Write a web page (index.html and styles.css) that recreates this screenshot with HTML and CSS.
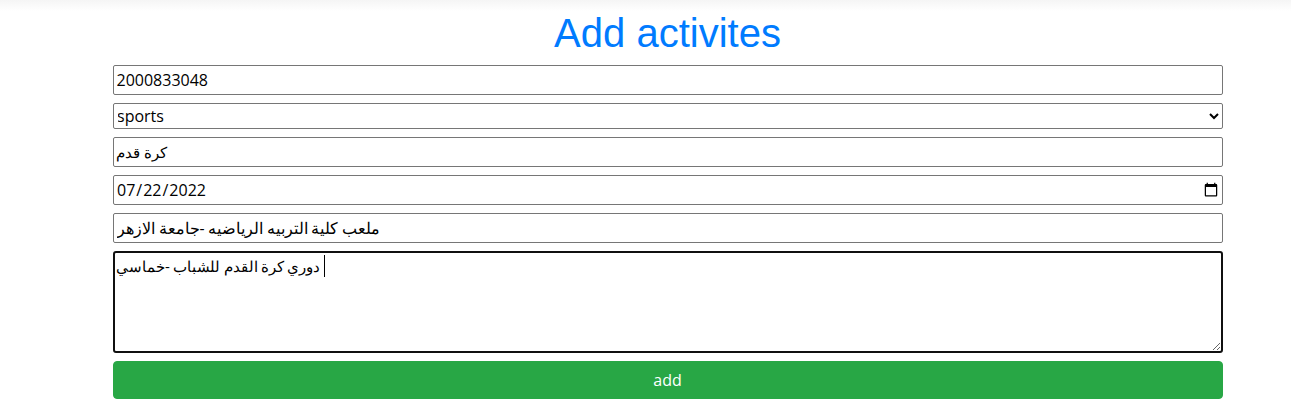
FILE: index.html
```html
<!DOCTYPE html>
<html lang="en">
<head>
<meta charset="utf-8">
<title>Add activites</title>
<link rel="stylesheet" href="styles.css">
</head>
<body>
<main class="container">
<h1 class="title">Add activites</h1>
<form class="form">
<input class="field number" type="text" value="2000833048">
<select class="field select"><option>sports</option></select>
<input class="field name" type="text" value="كرة قدم">
<input class="field date" type="date" value="2022-07-22">
<input class="field place" type="text" value="ملعب كلية التربيه الرياضيه -جامعة الازهر">
<div class="area-wrap"><textarea class="field area">دوري كرة القدم للشباب -خماسي</textarea><span class="caret"></span></div>
<button class="btn" type="button">add</button>
</form>
</main>
</body>
</html>
```
FILE: styles.css
```css
* { box-sizing: border-box; }
body { margin: 0; background: linear-gradient(#f5f5f5, #fff 11px) no-repeat; font-family: "Open Sans", "Noto Sans", sans-serif; font-size: 16px; line-height: 24px; overflow: hidden; }
.container { width: 1110px; margin-left: 113px; padding-top: 9px; }
.title { margin: 0 0 8px; padding-right: 1px; font-family: "Liberation Sans", Arial, sans-serif; font-weight: 400; font-size: 40px; line-height: 48px; color: #007bff; text-align: center; }
.form { display: flex; flex-direction: column; gap: 8px; }
.field { display: block; width: 100%; height: 30px; margin: 0; padding: 1px 2px; border: 1px solid #767676; border-radius: 2px; background: #fff; color: #000; font: inherit; }
.number { padding-left: 2.5px; }
.select { height: 26px; padding: 0 1px 0 0; text-indent: -1px; }
.name { font-size: 15px; }
.date { padding-right: 1px; }
.place { font-size: 15.8px; padding-left: 3px; word-spacing: -0.5px; }
.area-wrap { position: relative; height: 102px; }
.area { height: 102px; border: 2px solid #101010; border-radius: 3px; outline: 0; padding: 1px; font-size: 15px; line-height: 24px; word-spacing: -0.5px; resize: vertical; }
.caret { position: absolute; left: 211px; top: 4px; width: 1px; height: 22px; background: #000; }
.btn { height: 38px; border: 1px solid #28a745; border-radius: 4px; background: #28a745; color: #fff; font: inherit; padding: 6px 13px 6px 12px; }
```
